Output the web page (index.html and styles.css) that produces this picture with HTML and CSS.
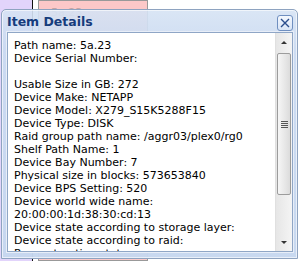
FILE: index.html
```html
<!DOCTYPE html>
<html lang="en">
<head>
<meta charset="UTF-8">
<title>Item Details</title>
<link rel="stylesheet" href="styles.css">
</head>
<body>
<!-- shapes behind the window -->
<div class="desk">
    <div class="shape shape-purple"></div>
    <div class="shape shape-pink">
        <div class="shape-label">5a.23</div>
        <div class="shape-label">DATA</div>
    </div>
</div>

<!-- dialog -->
<div class="dialog">
    <div class="dialog-title">
        <span class="title-text">Item Details</span>
        <button class="close-btn">
            <svg width="10" height="10" viewBox="0 0 10 10">
                <path d="M1 1 L9 9 M9 1 L1 9" stroke="#2a4d8c" stroke-width="1.4" fill="none"/>
            </svg>
        </button>
    </div>
    <div class="dialog-body">
        <div class="details">
            <div>Path name: 5a.23</div>
            <div>Device Serial Number:</div>
            <div>&nbsp;</div>
            <div>Usable Size in GB: 272</div>
            <div>Device Make: NETAPP</div>
            <div>Device Model: X279_S15K5288F15</div>
            <div>Device Type: DISK</div>
            <div>Raid group path name: /aggr03/plex0/rg0</div>
            <div>Shelf Path Name: 1</div>
            <div>Device Bay Number: 7</div>
            <div>Physical size in blocks: 573653840</div>
            <div>Device BPS Setting: 520</div>
            <div>Device world wide name:</div>
            <div>20:00:00:1d:38:30:cd:13</div>
            <div>Device state according to storage layer:</div>
            <div>Device state according to raid:</div>
            <div>Reconstruction status:</div>
        </div>
        <div class="scrollbar">
            <div class="arrow arrow-up"></div>
            <div class="track">
                <div class="thumb"><span class="grip"></span></div>
            </div>
            <div class="arrow arrow-down"></div>
        </div>
    </div>
</div>
</body>
</html>
```

FILE: styles.css
```css
body, html {
    margin: 0;
    padding: 0;
    background: #ffffff;
    overflow: hidden;
    font-family: "DejaVu Sans", Verdana, sans-serif;
}

/* shapes behind */
.desk {
    display: flex;
    gap: 5px;
    height: 261px;
    overflow: hidden;
}

.shape {
    height: 261px;
    box-sizing: border-box;
}

.shape-purple {
    width: 33px;
    background: #e2d4fb;
    border-right: 1px solid #111;
}

.shape-pink {
    width: 110px;
    background: #fcc8c8;
    border: 1px solid #999;
    padding: 6px 0 0 12px;
    color: #c4a4a4;
    font-size: 11px;
}

.shape-label {
    line-height: 12px;
}

/* dialog window */
.dialog {
    position: absolute;
    left: 1px;
    top: 9px;
    width: 297px;
    height: 250px;
    box-sizing: border-box;
    border: 1px solid #8ea3c0;
    border-radius: 5px 5px 0 0;
    background: linear-gradient(to bottom, rgba(214, 227, 244, 0.9), rgba(202, 218, 241, 0.94) 40px, rgba(198, 215, 239, 0.97));
    box-shadow: inset 0 0 0 1px rgba(255, 255, 255, 0.6);
    padding: 0 4px 6px 5px;
    display: flex;
    flex-direction: column;
}

.dialog-title {
    height: 22px;
    display: flex;
    align-items: center;
    justify-content: space-between;
}

.title-text {
    font-weight: bold;
    font-size: 12.5px;
    color: #163c7c;
    margin-top: 1px;
}

.close-btn {
    width: 16px;
    height: 16px;
    padding: 0;
    margin-top: 3px;
    border: 1px solid #6f8fc0;
    border-radius: 3px;
    background: linear-gradient(#f4f8fe, #d8e4f6);
    display: flex;
    align-items: center;
    justify-content: center;
}

.dialog-body {
    flex: 1;
    display: flex;
    background: #ffffff;
    border: 1px solid #8fa6c6;
    box-shadow: 0 0 0 1px #e8eef8;
    overflow: hidden;
}

.details {
    flex: 1;
    padding: 6px 0 0 6px;
    font-size: 11px;
    line-height: 13px;
    color: #000;
    white-space: nowrap;
    overflow: hidden;
}

/* scrollbar */
.scrollbar {
    width: 16px;
    display: flex;
    flex-direction: column;
    background: linear-gradient(to right, #e6e6e6, #f4f4f4);
    border-left: 1px solid #e0e0e0;
}

.arrow {
    height: 17px;
    position: relative;
}

.arrow::after {
    content: '';
    position: absolute;
    left: 5px;
    border-left: 3px solid transparent;
    border-right: 3px solid transparent;
}

.arrow-up::after {
    top: 8px;
    border-bottom: 3px solid #333;
}

.arrow-down::after {
    top: 7px;
    border-top: 3px solid #333;
}

.track {
    flex: 1;
    padding-top: 3px;
}

.thumb {
    height: 142px;
    margin: 0 1px;
    box-sizing: border-box;
    border: 1px solid #9c9c9c;
    border-radius: 2px;
    background: linear-gradient(to right, #f6f6f6, #dcdcdc);
    display: flex;
    align-items: center;
    justify-content: center;
}

.grip {
    width: 7px;
    height: 7px;
    background: repeating-linear-gradient(to bottom, #555 0, #555 1px, transparent 1px, transparent 2px);
}
```
